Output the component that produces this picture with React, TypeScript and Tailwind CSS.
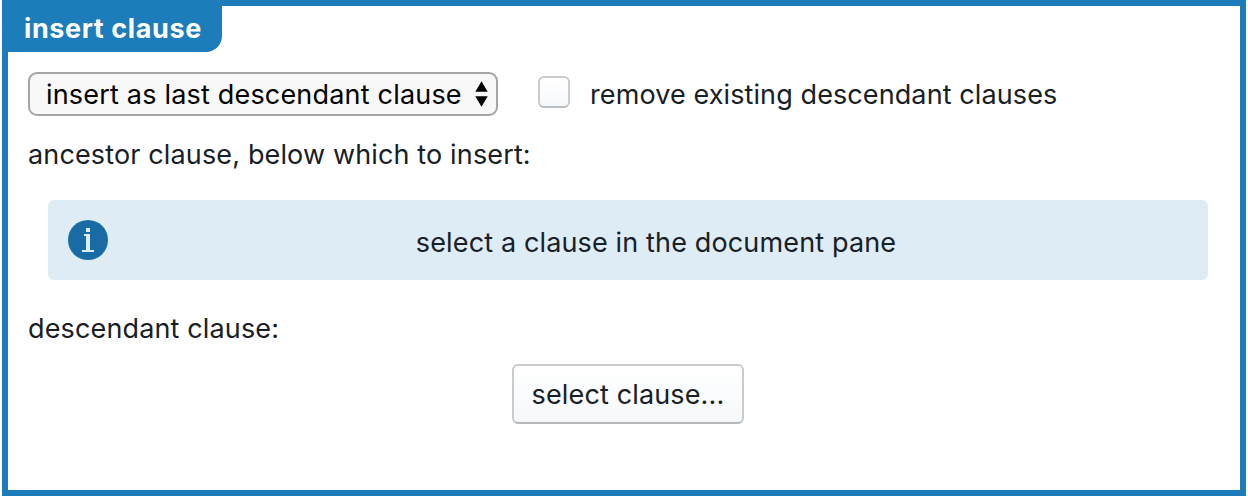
import React from 'react';

function InfoIcon() {
  return (
    <svg width="40" height="40" viewBox="0 0 40 40" className="shrink-0">
      <circle cx="20" cy="20" r="20" fill="#196ba3" />
      <path d="M18 8h4v4h-4zM16 14h6v16h4v2H14v-2h4V16h-2z" fill="#deecf5" />
    </svg>
  );
}

function SelectArrows() {
  return (
    <svg width="13" height="26" viewBox="0 0 13 26" className="shrink-0">
      <path d="M6.500 0.300L12.700 10.700H0.300zM6.500 25.700L0.300 15.300h12.400z" fill="#000" />
    </svg>
  );
}

export default function App() {
  return (
    <div className="w-[1248px] h-[498px] bg-white pl-[2px] pr-[2px] pb-[2px] font-['Inter',sans-serif] text-[27px] leading-[36px] tracking-[0.14px] text-[#182026]">
      <section className="h-[496px] border-[6px] border-[#1d7cba] flex flex-col items-start">
        <h2 className="h-[46px] w-[214px] pl-4 pt-[5px] bg-[#1d7cba] text-white font-bold tracking-[0.6px] rounded-br-[16px] whitespace-nowrap">
          insert clause
        </h2>

        <div className="mt-5 ml-5 h-11 flex items-center">
          <button className="w-[470px] h-11 pl-4 pr-2 flex items-center justify-between rounded-[9px] border-2 border-[#a5a5a5] bg-[#f8f8f8] text-black tracking-[0.19px] whitespace-nowrap">
            <span className="pt-0.5">insert as last descendant clause</span>
            <SelectArrows />
          </button>
          <label className="ml-10 flex items-center gap-5 tracking-[0.1px]">
            <span className="size-8 -mt-1 rounded-[6px] border-2 border-[#c9cbcf] border-b-[#b9bcc0] bg-linear-to-b from-white to-[#f5f8fa]" />
            <span className="pt-0.5">remove existing descendant clauses</span>
          </label>
        </div>

        <p className="mt-[21px] ml-5">ancestor clause, below which to insert:</p>

        <div className="mt-[27px] ml-10 w-[1160px] h-20 px-5 flex items-center rounded-[6px] bg-[#deecf5]">
          <InfoIcon />
          <p className="flex-1 pl-4 pt-1.5 text-center">select a clause in the document pane</p>
        </div>

        <p className="mt-[31px] ml-5">descendant clause:</p>

        <button className="mt-[17px] ml-[504px] w-[232px] h-[60px] pt-0.5 rounded-[6px] border-2 border-[#c9cbcd] border-b-[#b6b9bc] bg-linear-to-b from-white to-[#f5f8fa] whitespace-nowrap">
          select clause...
        </button>
      </section>
    </div>
  );
}
